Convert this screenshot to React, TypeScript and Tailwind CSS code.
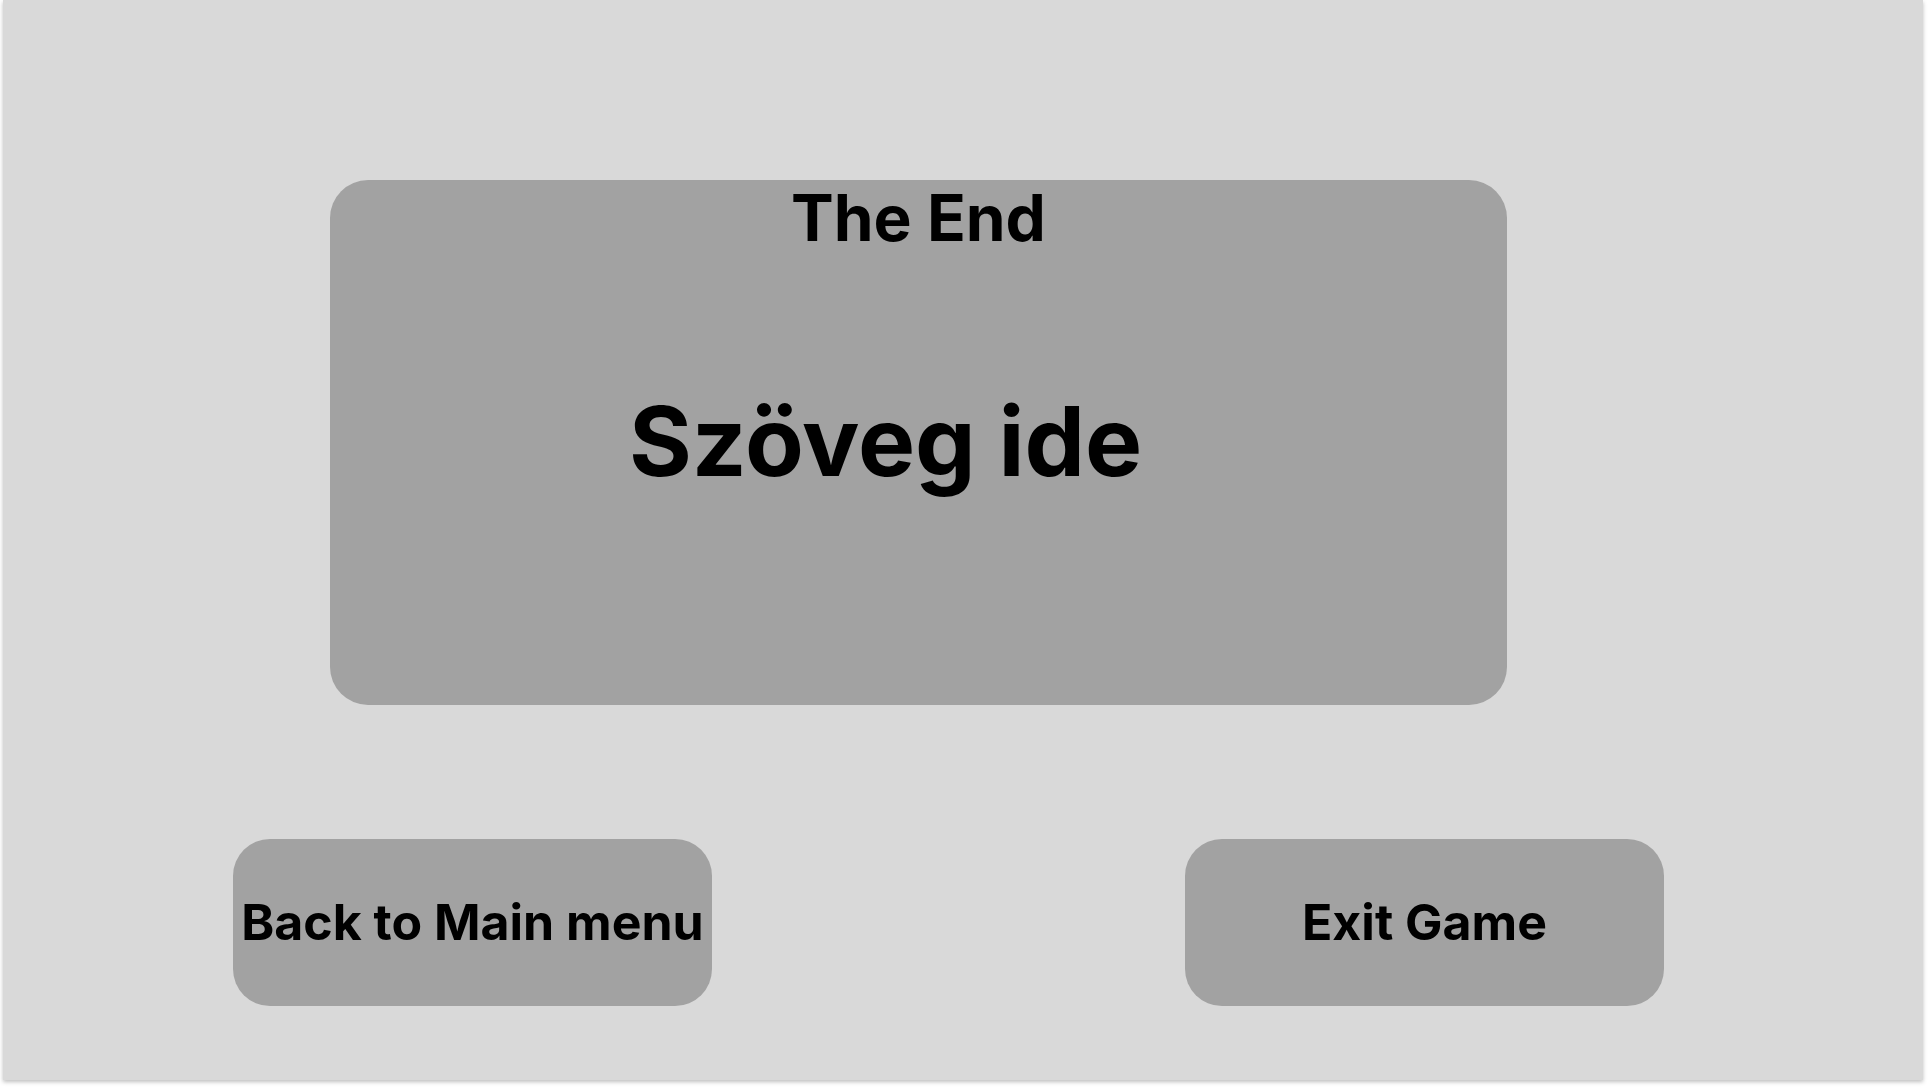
import React from "react";

export default function App() {
  const font = { fontFamily: "Inter, 'Noto Sans', sans-serif" };
  return (
    <div className="w-[1928px] h-[1088px] bg-white overflow-hidden" style={font}>
      <div className="ml-[3px] w-[1920px] h-[1080px] bg-[#d9d9d9] shadow-[0_2px_4px_rgba(0,0,0,0.25)] flex flex-col">
        <div className="mt-[180px] ml-[327px] w-[1177px] h-[525px] bg-[#a2a2a2] rounded-[38px] flex flex-col">
          <div className="-mt-[10px] text-center text-[64px] font-bold text-black leading-normal">The End</div>
          <div className="mt-[103px] pl-[299px] text-[96px] font-bold text-black leading-normal">Szöveg ide</div>
        </div>
        <div className="mt-[134px] flex">
          <button className="ml-[230px] w-[479px] h-[167px] bg-[#a2a2a2] rounded-[37px] flex items-center justify-center text-[50px] font-bold text-black leading-normal">
            Back to Main menu
          </button>
          <button className="ml-[473px] w-[479px] h-[167px] bg-[#a2a2a2] rounded-[37px] flex items-center justify-center text-[50px] font-bold text-black leading-normal">
            Exit Game
          </button>
        </div>
      </div>
    </div>
  );
}
